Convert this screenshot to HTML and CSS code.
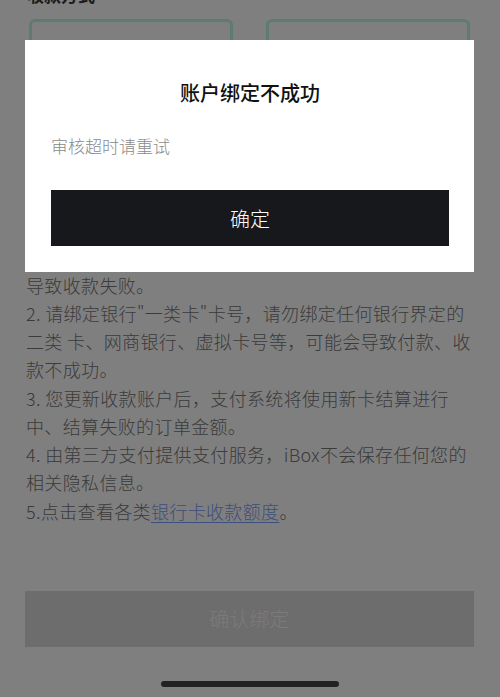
FILE: index.html
```html
<!DOCTYPE html>
<html lang="zh-CN">
<head>
<meta charset="utf-8">
<title>账户绑定</title>
<link rel="stylesheet" href="styles.css">
</head>
<body>
<div class="page">
  <div class="section-title">收款方式</div>
  <div class="cards">
    <div class="card"></div>
    <div class="card"></div>
  </div>
  <div class="notice">
    <span class="line">1. 请确保银行卡为本人身份证开户的银行卡，</span>
    <span class="line">并确保银行预留手机号正确，否则可能会</span>
    <span class="line">导致收款失败。</span>
    <span class="line">2. 请绑定银行"一类卡"卡号，请勿绑定任何银行界定的</span>
    <span class="line">二类 卡、网商银行、虚拟卡号等，可能会导致付款、收</span>
    <span class="line">款不成功。</span>
    <span class="line">3. 您更新收款账户后，支付系统将使用新卡结算进行</span>
    <span class="line">中、结算失败的订单金额。</span>
    <span class="line">4. 由第三方支付提供支付服务，iBox不会保存任何您的</span>
    <span class="line">相关隐私信息。</span>
    <span class="line">5.点击查看各类<a class="link" href="#">银行卡收款额度</a>。</span>
  </div>
  <button class="bind-btn" type="button">确认绑定</button>
</div>

<div class="overlay">
  <div class="modal">
    <div class="modal-title">账户绑定不成功</div>
    <div class="modal-msg">审核超时请重试</div>
    <button class="modal-btn" type="button">确定</button>
  </div>
</div>

<div class="home-indicator"></div>
</body>
</html>
```

FILE: styles.css
```css
html, body {
  margin: 0;
  padding: 0;
  background: #ffffff;
}

body {
  width: 500px;
  height: 697px;
  overflow: hidden;
  font-family: "Noto Sans CJK SC", "Noto Sans", sans-serif;
}

.page {
  padding: 0 26px;
}

.section-title {
  margin-top: -16px;
  margin-left: 1px;
  font-size: 17px;
  line-height: 22px;
  font-weight: 700;
  color: #3a3a3a;
}

.cards {
  margin-top: 13px;
  display: flex;
  justify-content: space-between;
  padding: 0 4px 0 3px;
}

.card {
  width: 198px;
  height: 64px;
  border: 3px solid #bdf4e9;
  border-radius: 6px;
}

.notice {
  margin-top: 125px;
  font-size: 18px;
  line-height: 28.25px;
  letter-spacing: 0.35px;
  font-weight: 300;
  color: #767676;
}

.line {
  display: block;
  white-space: nowrap;
}

.link {
  color: #7a9ef4;
  text-decoration: underline;
  text-underline-offset: 3px;
}

.bind-btn {
  display: block;
  margin-top: 66px;
  width: 449px;
  margin-left: -1px;
  height: 56px;
  border: none;
  border-radius: 0;
  background: #dadada;
  color: #f4f4f4;
  font-family: inherit;
  font-size: 20px;
  font-weight: 300;
}

.overlay {
  position: fixed;
  inset: 0;
  background: rgba(0, 0, 0, 0.5);
}

.modal {
  position: absolute;
  left: 25px;
  top: 40px;
  width: 449px;
  height: 232px;
  box-sizing: border-box;
  background: #ffffff;
  padding: 38px 25px 0 26px;
  display: flex;
  flex-direction: column;
}

.modal-title {
  text-align: center;
  font-size: 20px;
  line-height: 30px;
  font-weight: 500;
  color: #111111;
}

.modal-msg {
  margin-top: 25px;
  font-size: 17px;
  line-height: 26px;
  font-weight: 300;
  color: #8a8a8a;
}

.modal-btn {
  margin-top: 31px;
  height: 56px;
  width: 398px;
  border: none;
  border-radius: 0;
  background: #17181c;
  color: #ffffff;
  font-family: inherit;
  font-size: 20px;
  font-weight: 300;
}

.home-indicator {
  position: fixed;
  left: 161px;
  top: 681px;
  width: 178px;
  height: 6px;
  border-radius: 3px;
  background: #222222;
}
```
